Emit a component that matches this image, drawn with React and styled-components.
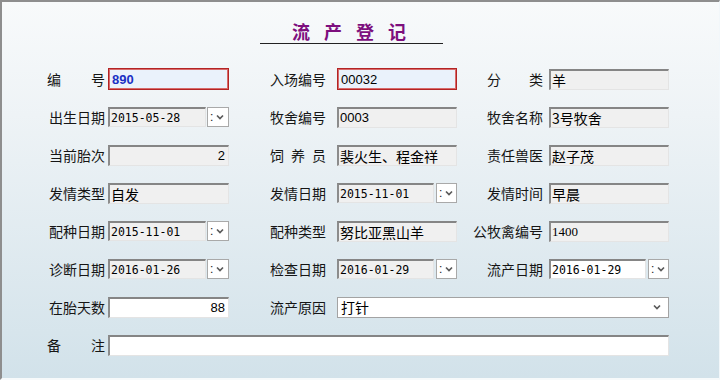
import React from 'react';
import styled, { createGlobalStyle } from 'styled-components';

const GlobalStyle = createGlobalStyle`
  html, body {
    margin: 0;
    padding: 0;
  }
  body {
    width: 720px;
    height: 380px;
    overflow: hidden;
    font-family: "Noto Sans CJK SC", sans-serif;
  }
`;

const Window = styled.div`
  box-sizing: border-box;
  width: 720px;
  height: 380px;
  border-top: 2px solid #8e8e8e;
  border-left: 2px solid #8e8e8e;
  border-right: 1px solid #f2f7fa;
  border-bottom: 2px solid #f7fafb;
  background: linear-gradient(to bottom, #f8fafb 0%, #eef3f6 30%, #d2e2ea 100%);
  padding: 17px 0 0 45px;
`;

const Header = styled.div`
  display: flex;
  padding-left: 213px;
`;

const Title = styled.div`
  width: 183px;
  box-sizing: border-box;
  padding-left: 9px;
  text-align: center;
  font-size: 18px;
  line-height: 24px;
  font-weight: 700;
  color: #7d0f7d;
  letter-spacing: 14px;
  border-bottom: 1px solid #222;
`;

const Form = styled.div`
  display: grid;
  grid-template-columns: 223px 203px 200px;
  grid-auto-rows: 22px;
  row-gap: 16px;
  margin-top: 24px;
`;

const Field = styled.div`
  display: flex;
  align-items: center;
  gap: ${(p) => p.$gap}px;
  grid-column: ${(p) => p.$span || 'auto'};
`;

const Label = styled.div`
  flex: none;
  width: ${(p) => p.$w}px;
  display: flex;
  justify-content: ${(p) => (p.$spread ? 'space-between' : 'flex-end')};
  font-size: 14px;
  line-height: 18px;
  color: #151515;
  white-space: nowrap;
`;

const variants = {
  gray: `
    background: #f0f0f0;
    border-top: 2px solid #858585;
    border-left: 2px solid #8c8c8c;
    border-right: 1px solid #e4e4e4;
    border-bottom: 1px solid #e4e4e4;
  `,
  white: `
    background: #ffffff;
    border-top: 2px solid #858585;
    border-left: 2px solid #8c8c8c;
    border-right: 1px solid #e4e4e4;
    border-bottom: 1px solid #e4e4e4;
  `,
  red: `
    background: #eaf2fb;
    border: 1px solid #b32424;
    box-shadow: inset 0 0 0 1px #d86a6a;
  `,
};

const Box = styled.div`
  box-sizing: border-box;
  flex: none;
  width: ${(p) => p.$w}px;
  height: ${(p) => p.$h || 21}px;
  display: flex;
  align-items: center;
  justify-content: ${(p) => (p.$right ? 'flex-end' : 'flex-start')};
  padding: 0 3px 0 ${(p) => (p.$variant === 'red' ? 3 : 1)}px;
  overflow: hidden;
  white-space: nowrap;
  color: #000;
  font-size: 13px;
  font-family: ${(p) =>
    p.$font === 'mono'
      ? '"DejaVu Sans Mono", "Liberation Mono", monospace'
      : p.$font === 'serif'
      ? '"Liberation Serif", serif'
      : p.$font === 'cjk'
      ? '"Noto Sans CJK SC", sans-serif'
      : '"Liberation Sans", Arial, sans-serif'};
  ${(p) => p.$font === 'mono' && 'font-size: 11.5px;'}
  ${(p) => p.$font === 'cjk' && 'font-size: 14px;'}
  ${(p) => variants[p.$variant]}
`;

const Strong = styled.span`
  color: #1b2fc4;
  font-weight: 700;
  font-size: 13px;
`;

const DateGroup = styled.div`
  flex: none;
  display: flex;
  align-items: center;
  gap: ${(p) => p.$gap}px;
`;

const DropButton = styled.div`
  box-sizing: border-box;
  width: ${(p) => p.$w}px;
  height: 20px;
  background: #fff;
  border: 1px solid #a9a9a9;
  display: flex;
  align-items: center;
  padding-left: 2px;
  gap: 3px;
  font-family: "Liberation Sans", Arial, sans-serif;
  font-size: 12px;
  color: #222;
`;

const Select = styled.div`
  box-sizing: border-box;
  width: ${(p) => p.$w}px;
  height: 21px;
  background: #fff;
  border: 1px solid #a3a3a3;
  display: flex;
  align-items: center;
  justify-content: space-between;
  padding: 0 7px 0 3px;
  font-size: 14px;
  color: #000;
`;

const Chevron = () => (
  <svg width="8" height="6" viewBox="0 0 8 6">
    <path d="M1 1.5 L4 4.5 L7 1.5" fill="none" stroke="#5a5a5a" strokeWidth="1.7" />
  </svg>
);

const FieldLabel = ({ text, w, spread }) => (
  <Label $w={w} $spread={spread}>
    {spread ? text.split('').map((c, i) => <span key={i}>{c}</span>) : text}
  </Label>
);

const DateField = ({ value, w, bw, gap, variant = 'gray' }) => (
  <DateGroup $gap={gap}>
    <Box $w={w} $h={20} $variant={variant} $font="mono">
      {value}
    </Box>
    <DropButton $w={bw}>
      <span>:</span>
      <Chevron />
    </DropButton>
  </DateGroup>
);

const COL = [
  { w: 58, gap: 3, box: 121 },
  { w: 56, gap: 11, box: 120 },
  { w: 70, gap: 6, box: 120 },
];

const App = () => (
  <>
    <GlobalStyle />
    <Window>
      <Header>
        <Title>流产登记</Title>
      </Header>
      <Form>
        <Field $gap={COL[0].gap}>
          <FieldLabel text="编号" w={COL[0].w} spread />
          <Box $w={COL[0].box} $h={22} $variant="red">
            <Strong>890</Strong>
          </Box>
        </Field>
        <Field $gap={COL[1].gap}>
          <FieldLabel text="入场编号" w={COL[1].w} />
          <Box $w={COL[1].box} $h={22} $variant="red">00032</Box>
        </Field>
        <Field $gap={COL[2].gap}>
          <Label $w={COL[2].w} $spread style={{ paddingLeft: 14, boxSizing: 'border-box' }}>
            <span>分</span>
            <span>类</span>
          </Label>
          <Box $w={COL[2].box} $variant="gray" $font="cjk">羊</Box>
        </Field>

        <Field $gap={COL[0].gap}>
          <FieldLabel text="出生日期" w={COL[0].w} />
          <DateField value="2015-05-28" w={98} bw={22} gap={1} />
        </Field>
        <Field $gap={COL[1].gap}>
          <FieldLabel text="牧舍编号" w={COL[1].w} />
          <Box $w={COL[1].box} $variant="gray">0003</Box>
        </Field>
        <Field $gap={COL[2].gap}>
          <FieldLabel text="牧舍名称" w={COL[2].w} />
          <Box $w={COL[2].box} $variant="gray" $font="cjk">3号牧舍</Box>
        </Field>

        <Field $gap={COL[0].gap}>
          <FieldLabel text="当前胎次" w={COL[0].w} />
          <Box $w={COL[0].box} $variant="gray" $right>2</Box>
        </Field>
        <Field $gap={COL[1].gap}>
          <Label $w={COL[1].w} $spread>
            <span>饲</span>
            <span>养</span>
            <span>员</span>
          </Label>
          <Box $w={COL[1].box} $variant="gray" $font="cjk">裴火生、程金祥</Box>
        </Field>
        <Field $gap={COL[2].gap}>
          <FieldLabel text="责任兽医" w={COL[2].w} />
          <Box $w={COL[2].box} $variant="gray" $font="cjk">赵子茂</Box>
        </Field>

        <Field $gap={COL[0].gap}>
          <FieldLabel text="发情类型" w={COL[0].w} />
          <Box $w={COL[0].box} $variant="gray" $font="cjk">自发</Box>
        </Field>
        <Field $gap={COL[1].gap}>
          <FieldLabel text="发情日期" w={COL[1].w} />
          <DateField value="2015-11-01" w={97} bw={21} gap={2} />
        </Field>
        <Field $gap={COL[2].gap}>
          <FieldLabel text="发情时间" w={COL[2].w} />
          <Box $w={COL[2].box} $variant="gray" $font="cjk">早晨</Box>
        </Field>

        <Field $gap={COL[0].gap}>
          <FieldLabel text="配种日期" w={COL[0].w} />
          <DateField value="2015-11-01" w={98} bw={22} gap={1} />
        </Field>
        <Field $gap={COL[1].gap}>
          <FieldLabel text="配种类型" w={COL[1].w} />
          <Box $w={COL[1].box} $variant="gray" $font="cjk">努比亚黑山羊</Box>
        </Field>
        <Field $gap={COL[2].gap}>
          <FieldLabel text="公牧禽编号" w={COL[2].w} />
          <Box $w={COL[2].box} $variant="gray" $font="serif">1400</Box>
        </Field>

        <Field $gap={COL[0].gap}>
          <FieldLabel text="诊断日期" w={COL[0].w} />
          <DateField value="2016-01-26" w={98} bw={22} gap={1} />
        </Field>
        <Field $gap={COL[1].gap}>
          <FieldLabel text="检查日期" w={COL[1].w} />
          <DateField value="2016-01-29" w={97} bw={21} gap={2} />
        </Field>
        <Field $gap={COL[2].gap}>
          <FieldLabel text="流产日期" w={COL[2].w} />
          <DateField value="2016-01-29" w={97} bw={21} gap={2} variant="white" />
        </Field>

        <Field $gap={COL[0].gap}>
          <FieldLabel text="在胎天数" w={COL[0].w} />
          <Box $w={COL[0].box} $variant="white" $right>88</Box>
        </Field>
        <Field $gap={COL[1].gap} $span="2 / 4">
          <FieldLabel text="流产原因" w={COL[1].w} />
          <Select $w={332}>
            <span>打针</span>
            <Chevron />
          </Select>
        </Field>

        <Field $gap={COL[0].gap} $span="1 / 4">
          <FieldLabel text="备注" w={COL[0].w} spread />
          <Box $w={561} $variant="white" />
        </Field>
      </Form>
    </Window>
  </>
);

export default App;
